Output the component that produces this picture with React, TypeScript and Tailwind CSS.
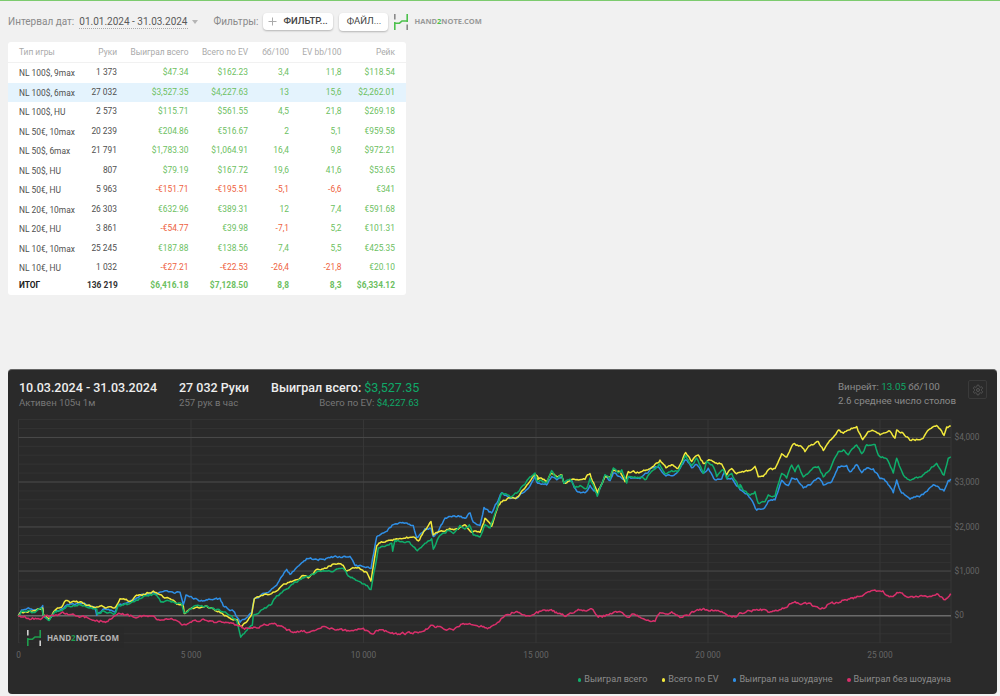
import React from "react";

type P = [number, number];
const map = (ox: number, oy: number, pts: number[][]): P[] => pts.map(([x, y]) => [ox + x / 3, oy + y / 3]);

const yellow: P[] = [
  ...map(0, 526, [[55,270],[62,260],[80,260],[110,250],[128,245],[130,268],[148,280],[165,255],[185,245],[197,225],[210,230],[245,228],[260,238],[285,245],[305,238],[320,245],[345,245],[360,217],[390,225],[410,207],[430,205],[460,195],[475,205],[490,215],[510,218],[530,235],[550,240],[553,262],[575,245],[600,245],[620,240],[645,255],[665,262],[690,275],[712,280],[722,300],[740,288],[755,265],[763,220],[800,205],[830,195],[855,175],[880,165],[905,150],[925,155],[945,135],[970,130],[1000,115],[1030,118],[1040,135],[1070,125],[1100,140],[1113,165]]),
  ...map(370, 450, [[20,290],[30,280],[60,270],[90,265],[130,262],[145,272],[165,240],[183,215],[190,255],[210,245],[235,240],[260,235],[285,225],[305,245],[330,247],[345,205],[365,230],[385,165],[400,150],[420,145],[445,140],[470,105],[495,75],[505,85],[500,90]]),
  ...map(540, 440, [[0,115],[20,125],[33,100],[50,110],[65,105],[72,130],[95,120],[115,120],[135,120],[150,100],[172,160],[195,110],[210,115],[220,90],[240,95],[255,125],[265,95],[300,97],[330,85],[360,60],[378,85],[395,75],[415,85],[437,38],[455,65],[475,45],[490,70],[510,60],[545,72],[560,105],[575,85],[590,100],[600,97]]),
  ...map(740, 415, [[0,172],[30,168],[45,155],[55,185],[70,185],[85,165],[105,162],[125,115],[140,125],[160,88],[180,92],[195,110],[210,92],[235,80],[250,108],[265,85],[295,45],[310,55],[350,33],[368,73],[385,50],[405,50],[420,60],[450,50],[465,70],[470,45],[490,55],[510,75],[545,70],[565,45],[590,30],[612,62],[620,35],[632,32]]),
];
const green: P[] = [
  ...map(0, 526, [[55,270],[65,255],[100,258],[125,250],[130,268],[148,283],[165,255],[185,255],[200,240],[240,235],[265,245],[290,250],[292,265],[310,255],[345,262],[355,238],[385,235],[410,222],[450,205],[470,208],[482,228],[510,225],[545,235],[552,260],[590,240],[620,240],[650,250],[680,262],[710,285],[722,335],[740,315],[757,298],[760,268],[790,250],[815,235],[830,208],[860,190],[880,175],[900,160],[930,150],[960,135],[990,135],[1030,130],[1045,150],[1075,165],[1113,190]]),
  ...map(370, 450, [[20,325],[25,295],[45,290],[65,280],[68,305],[75,270],[115,275],[130,290],[142,302],[165,280],[185,265],[190,297],[205,265],[235,240],[250,250],[270,225],[285,238],[298,225],[310,255],[330,260],[345,225],[360,235],[380,180],[395,130],[420,140],[440,130],[460,105],[495,68],[500,90]]),
  ...map(540, 440, [[0,120],[20,128],[35,93],[50,115],[65,105],[72,130],[90,118],[105,145],[120,135],[140,145],[150,115],[172,168],[195,105],[210,118],[220,85],[235,100],[245,90],[260,130],[265,110],[300,112],[315,120],[330,100],[358,70],[375,100],[395,90],[415,95],[437,45],[455,75],[470,55],[490,100],[500,65],[520,80],[530,110],[550,90],[560,115],[575,100],[595,140],[600,145]]),
  ...map(740, 415, [[0,208],[10,225],[30,240],[45,230],[55,265],[75,262],[85,240],[105,245],[125,175],[140,190],[155,150],[165,170],[175,150],[190,185],[215,165],[235,155],[250,185],[270,165],[295,110],[310,105],[325,120],[350,90],[365,115],[380,88],[405,90],[415,120],[440,130],[460,175],[470,130],[490,180],[510,197],[545,185],[590,145],[612,180],[625,130],[632,125]]),
];
const blue: P[] = [
  ...map(0, 526, [[55,270],[65,252],[85,245],[110,250],[128,238],[130,268],[148,278],[165,255],[190,250],[210,235],[245,233],[285,245],[290,268],[310,248],[345,258],[352,240],[380,232],[430,205],[470,205],[490,198],[540,198],[550,235],[558,207],[600,225],[630,222],[660,218],[670,240],[700,255],[720,290],[755,262],[763,218],[800,200],[830,178],[860,130],[870,145],[920,98],[970,100],[990,95],[1050,90],[1065,118],[1113,128]]),
  ...map(370, 450, [[20,260],[40,250],[70,225],[110,218],[130,225],[140,260],[165,235],[183,235],[190,260],[205,245],[225,205],[265,198],[285,205],[300,190],[310,215],[330,225],[342,172],[365,190],[380,160],[395,128],[420,145],[445,140],[475,115],[495,75],[500,95]]),
  ...map(540, 440, [[0,130],[20,135],[35,110],[50,120],[65,110],[72,130],[95,122],[110,155],[135,158],[150,135],[172,160],[195,105],[210,120],[220,100],[240,110],[255,118],[265,110],[300,115],[320,100],[335,85],[355,80],[378,108],[410,100],[437,60],[455,85],[470,75],[490,100],[505,85],[525,120],[545,118],[555,95],[562,118],[575,115],[590,140],[600,150]]),
  ...map(740, 415, [[0,225],[20,235],[35,255],[50,285],[70,280],[85,258],[105,255],[125,195],[145,210],[155,190],[170,190],[190,218],[215,205],[235,190],[250,210],[275,200],[295,155],[320,150],[330,170],[350,148],[365,172],[380,158],[400,160],[420,190],[440,200],[460,235],[470,195],[485,235],[510,252],[550,240],[580,208],[612,228],[625,195],[632,192]]),
];
const pink: P[] = [
  ...map(0, 526, [[55,270],[85,275],[110,280],[150,270],[200,262],[230,270],[290,282],[320,285],[360,265],[400,272],[460,270],[480,282],[510,280],[550,295],[610,280],[650,290],[700,290],[730,305],[820,295],[880,320],[940,315],[970,300],[1040,315],[1090,305],[1115,322],[1130,312],[1200,325],[1270,315],[1300,298],[1360,312],[1390,292],[1470,305]]),
  ...map(500, 526, [[0,285],[35,258],[85,268],[110,256],[150,252],[195,272],[235,250],[275,250],[295,275],[355,258],[380,272],[400,265],[440,282],[465,287],[480,262],[515,258],[540,275],[600,248],[650,255],[700,270],[770,250],[815,258],[855,245],[885,225],[920,235],[970,247],[985,235],[1030,222],[1075,212],[1105,198],[1145,198],[1175,212],[1195,200],[1225,212],[1290,212],[1315,205],[1335,222],[1352,203]]),
];

const build = (pts: P[], seed: number, amp: number) => {
  let s = seed * 7919;
  const rnd = () => {
    s = (s * 16807) % 2147483647;
    return s / 2147483647 - 0.5;
  };
  let w = 0;
  const out: string[] = [];
  pts.forEach(([x, y], i) => {
    const next = pts[i + 1];
    if (!next) {
      out.push(`L${x.toFixed(1)} ${y.toFixed(1)}`);
      return;
    }
    const n = Math.max(1, Math.round(Math.abs(next[0] - x) / 1.3));
    for (let k = 0; k < n; k++) {
      const t = k / n;
      w = 0.6 * w + rnd() * amp;
      const j = k === 0 ? w * 0.4 : w;
      out.push(`${out.length ? "L" : "M"}${(x + (next[0] - x) * t).toFixed(1)} ${(y + (next[1] - y) * t + j).toFixed(1)}`);
    }
  });
  return out.join("");
};

const minor: number[] = [];
for (let i = 0; i < 26; i++) minor.push(419.5 + i * 8.93);
const major = [437.5, 482, 527, 571];
const verts = [18.5, 191, 363.5, 536, 708, 880, 951];

const rows = [
  ["NL 100$, 9max", "1 373", "$47.34", "$162.23", "3,4", "11,8", "$118.54"],
  ["NL 100$, 6max", "27 032", "$3,527.35", "$4,227.63", "13", "15,6", "$2,262.01"],
  ["NL 100$, HU", "2 573", "$115.71", "$561.55", "4,5", "21,8", "$269.18"],
  ["NL 50€, 10max", "20 239", "€204.86", "€516.67", "2", "5,1", "€959.58"],
  ["NL 50$, 6max", "21 791", "$1,783.30", "$1,064.91", "16,4", "9,8", "$972.21"],
  ["NL 50$, HU", "807", "$79.19", "$167.72", "19,6", "41,6", "$53.65"],
  ["NL 50€, HU", "5 963", "-€151.71", "-€195.51", "-5,1", "-6,6", "€341"],
  ["NL 20€, 10max", "26 303", "€632.96", "€389.31", "12", "7,4", "€591.68"],
  ["NL 20€, HU", "3 861", "-€54.77", "€39.98", "-7,1", "5,2", "€101.31"],
  ["NL 10€, 10max", "25 245", "€187.88", "€138.56", "7,4", "5,5", "€425.35"],
  ["NL 10€, HU", "1 032", "-€27.21", "-€22.53", "-26,4", "-21,8", "€20.10"],
];
const cols = "grid grid-cols-[68px_30px_71.5px_59.5px_41px_52.5px_53.5px] items-center pl-[11px] pr-[11px] whitespace-nowrap";
const headers = ["Тип игры", "Руки", "Выиграл всего", "Всего по EV", "бб/100", "EV bb/100", "Рейк"];
const total = ["ИТОГ", "136 219", "$6,416.18", "$7,128.50", "8,8", "8,3", "$6,334.12"];

const Logo = ({ dark }: { dark?: boolean }) => {
  const grey = dark ? "#d0d0d0" : "#8a8a8a";
  const g = dark ? "#1f9d4d" : "#4cc04c";
  return (
    <svg width="14" height="16" viewBox="0 0 14 16" className="shrink-0">
      <rect x="0" y="0" width="1.6" height="5.5" fill={grey} />
      <rect x="0" y="8" width="1.6" height="8" fill={g} />
      <rect x="12.4" y="0" width="1.6" height="8" fill={g} />
      <rect x="12.4" y="10.5" width="1.6" height="5.5" fill={grey} />
      <path d="M0 9.2H5.5L8 7H14" stroke={g} strokeWidth="1.6" fill="none" />
    </svg>
  );
};

const Gear = () => (
  <svg width="12" height="12" viewBox="0 0 24 24" fill="none" stroke="#5a5a5a" strokeWidth="1.8">
    <path d="M12.22 2h-.44a2 2 0 0 0-2 2v.18a2 2 0 0 1-1 1.73l-.43.25a2 2 0 0 1-2 0l-.15-.08a2 2 0 0 0-2.73.73l-.22.38a2 2 0 0 0 .73 2.73l.15.1a2 2 0 0 1 1 1.72v.51a2 2 0 0 1-1 1.74l-.15.09a2 2 0 0 0-.73 2.73l.22.38a2 2 0 0 0 2.73.73l.15-.08a2 2 0 0 1 2 0l.43.25a2 2 0 0 1 1 1.73V20a2 2 0 0 0 2 2h.44a2 2 0 0 0 2-2v-.18a2 2 0 0 1 1-1.73l.43-.25a2 2 0 0 1 2 0l.15.08a2 2 0 0 0 2.73-.73l.22-.39a2 2 0 0 0-.73-2.73l-.15-.08a2 2 0 0 1-1-1.74v-.5a2 2 0 0 1 1-1.74l.15-.09a2 2 0 0 0 .73-2.73l-.22-.38a2 2 0 0 0-2.73-.73l-.15.08a2 2 0 0 1-2 0l-.43-.25a2 2 0 0 1-1-1.73V4a2 2 0 0 0-2-2z" />
    <circle cx="12" cy="12" r="3" />
  </svg>
);

const legend = [
  ["Выиграл всего", "bg-[#0fae6b]"],
  ["Всего по EV", "bg-[#f2e93c]"],
  ["Выиграл на шоудауне", "bg-[#2f8fe6]"],
  ["Выиграл без шоудауна", "bg-[#d92f6b]"],
];

export default function App() {
  return (
    <div className="w-[1000px] h-[696px] overflow-hidden bg-[#f1f1f1] border-t border-[#7ccb6e] font-['Roboto',sans-serif]">
      <div className="flex items-center h-[41px] pl-2 text-[10px] text-[#8a8a8a] whitespace-nowrap">
        <span>Интервал дат:</span>
        <span className="ml-[5px] text-[#5a5a5a] border-b border-dotted border-[#aaa] leading-[13px]">01.01.2024 - 31.03.2024</span>
        <span className="ml-[4px] w-0 h-0 border-x-[3.5px] border-x-transparent border-t-[4px] border-t-[#b5b5b5]" />
        <span className="ml-4">Фильтры:</span>
        <button className="ml-[5px] w-[70px] h-[17px] shrink-0 flex items-center bg-white rounded-sm shadow-[0_1px_2px_rgba(0,0,0,0.25)] text-[#444] text-[9.5px] font-medium">
          <svg width="9" height="9" viewBox="0 0 9 9" className="ml-[5px] mr-[6px] shrink-0">
            <path d="M4.5 0.5V8.5M0.5 4.5H8.5" stroke="#aaa" strokeWidth="1" />
          </svg>
          ФИЛЬТР...
        </button>
        <button className="ml-[6px] w-[49px] h-[18px] shrink-0 flex items-center justify-center bg-white rounded-sm shadow-[0_1px_2px_rgba(0,0,0,0.25)] text-[#444] text-[9.5px]">ФАЙЛ...</button>
        <span className="ml-[6px] flex items-center gap-[6px]">
          <Logo />
          <span className="font-['Open_Sans',sans-serif] font-bold text-[7.5px] text-[#999]">
            HAND<span className="text-[#4cc04c]">2</span>NOTE.COM
          </span>
        </span>
      </div>

      <div className="ml-2 w-[398px] h-[253px] bg-white rounded-[3px] text-[8.4px] text-[#4f4f4f]">
        <div className={`${cols} h-[21px] border-b border-[#f1f1f1] text-[#aaa]`}>
          {headers.map((h, i) => (
            <span key={h} className={i === 0 ? "" : "text-right"}>{h}</span>
          ))}
        </div>
        {rows.map((r, ri) => (
          <div key={ri} className={`${cols} h-[19.5px] ${ri === 1 ? "bg-[#e4f3fd]" : ""}`}>
            {r.map((c, i) => (
              <span
                key={i}
                className={
                  i === 0
                    ? "pt-[2px]"
                    : i === 1
                      ? "text-right"
                      : c.startsWith("-")
                        ? "text-right text-[#ee5f3e]"
                        : "text-right text-[#6cc05f]"
                }
              >
                {c}
              </span>
            ))}
          </div>
        ))}
        <div className={`${cols} h-[15px] font-bold text-[#6cc05f]`}>
          {total.map((c, i) => (
            <span key={c} className={i === 0 ? "text-[#222]" : i === 1 ? "text-right text-[#333]" : "text-right"}>{c}</span>
          ))}
        </div>
      </div>

      <div className="relative ml-2 mt-[74px] w-[989px] h-[325px] bg-[#2a2a2a] rounded-[4px] border-t border-[#666]">
        <div className="flex h-[45px] pt-[10px] pl-[11px] whitespace-nowrap">
          <div className="w-[160px] shrink-0">
            <div className="text-[12.5px] leading-[16px] font-medium text-[#eeeeee]">10.03.2024 - 31.03.2024</div>
            <div className="text-[9.6px] leading-[14px] text-[#777]">Активен 105ч 1м</div>
          </div>
          <div className="w-[92px] shrink-0">
            <div className="text-[12.5px] leading-[16px] font-medium text-[#eeeeee]">27 032 Руки</div>
            <div className="text-[9.6px] leading-[14px] text-[#777]">257 рук в час</div>
          </div>
          <div className="w-[148px] shrink-0 text-right">
            <div className="text-[12.5px] leading-[16px] font-medium text-[#eeeeee]">
              Выиграл всего: <span className="font-normal text-[#0fa968]">$3,527.35</span>
            </div>
            <div className="text-[9.6px] leading-[14px] text-[#777]">
              Всего по EV: <span className="text-[#0fa968]">$4,227.63</span>
            </div>
          </div>
          <div className="ml-[419px] shrink-0 text-[9.8px] leading-[14px] text-[#8a8a8a]">
            <div>Винрейт: <span className="text-[#0fa968]">13.05</span> бб/100</div>
            <div>2.6 среднее число столов</div>
          </div>
          <div className="ml-[12px] shrink-0 w-[19px] h-[19px] flex items-center justify-center border border-[#3a3a3a] rounded-[2px]">
            <Gear />
          </div>
        </div>

        <svg width="989" height="250" viewBox="8 415 989 250" className="block">
          {minor.map((y) => (
            <line key={y} x1="18.5" x2="951" y1={y} y2={y} stroke="#333333" strokeWidth="1" />
          ))}
          {verts.map((x) => (
            <line key={x} x1={x} x2={x} y1="419.5" y2="643" stroke="#363636" strokeWidth="1" />
          ))}
          {major.map((y) => (
            <line key={y} x1="18.5" x2="951" y1={y} y2={y} stroke="#484848" strokeWidth="1" />
          ))}
          <line x1="18.5" x2="951" y1="615.7" y2="615.7" stroke="#6a6a6a" strokeWidth="1.5" />
          <path d={build(blue, 7, 2)} fill="none" stroke="#2f8fe6" strokeWidth="1.5" strokeLinejoin="round" />
          <path d={build(yellow, 11, 2)} fill="none" stroke="#f2e93c" strokeWidth="1.5" strokeLinejoin="round" />
          <path d={build(green, 23, 2)} fill="none" stroke="#0fae6b" strokeWidth="1.5" strokeLinejoin="round" />
          <path d={build(pink, 31, 2.4)} fill="none" stroke="#d92f6b" strokeWidth="1.5" strokeLinejoin="round" />
          {[["$4,000", 437.5], ["$3,000", 482], ["$2,000", 527], ["$1,000", 571], ["$0", 615.7]].map(([t, y]) => (
            <text key={t} x="954.5" y={Number(y) + 2.5} fontSize="8.3" fill="#666">{t}</text>
          ))}
          {[["0", 18.5], ["5 000", 191], ["10 000", 363.5], ["15 000", 536], ["20 000", 708], ["25 000", 880]].map(([t, x]) => (
            <text key={t} x={x} y="658" fontSize="8.3" fill="#666" textAnchor="middle">{t}</text>
          ))}
        </svg>

        <div className="flex justify-end gap-[14.5px] pr-[46px] pt-[8px] text-[9.1px] text-[#8a8a8a] whitespace-nowrap">
          {legend.map(([t, c]) => (
            <span key={t} className="flex items-center gap-[3px]">
              <span className={`w-[3.5px] h-[3.5px] rounded-full ${c}`} />
              {t}
            </span>
          ))}
        </div>

        <div className="absolute left-[12px] top-[257px] w-[104px] h-[21px] flex items-center pl-[7px] gap-[6px] bg-[#2a2a2a]/70">
          <Logo dark />
          <span className="font-['Open_Sans',sans-serif] font-bold text-[8px] text-[#b5b5b5] whitespace-nowrap">
            HAND<span className="text-[#1f9d4d]">2</span>NOTE.COM
          </span>
        </div>
      </div>
    </div>
  );
}
